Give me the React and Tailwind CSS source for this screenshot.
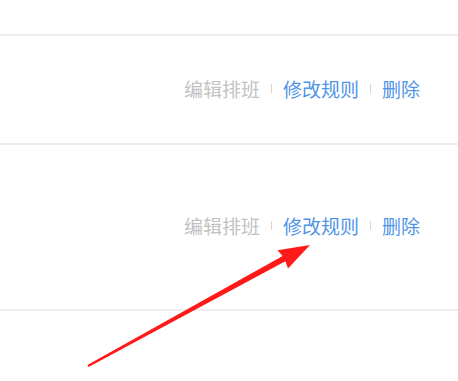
import React from "react";

const rows = [
  { height: "h-[109px]" },
  { height: "h-[166px]" },
];

function Actions() {
  return (
    <div className="flex items-center text-[19px] leading-none">
      <span className="text-[#c2c2c2] cursor-pointer">编辑排班</span>
      <span className="mx-[11px] h-[9px] w-px bg-[#d6d6d6]" />
      <span className="text-[#5094e8] cursor-pointer">修改规则</span>
      <span className="mx-[11px] h-[9px] w-px bg-[#d6d6d6]" />
      <span className="text-[#5094e8] cursor-pointer">删除</span>
    </div>
  );
}

export default function App() {
  return (
    <div
      className="relative h-[381px] w-[458px] overflow-hidden bg-white"
      style={{ fontFamily: '"Noto Sans CJK SC", "Noto Sans", sans-serif' }}
    >
      <div className="h-[36px] border-b-2 border-[#eeeeee]" />
      {rows.map((r, i) => (
        <div
          key={i}
          className={`${r.height} flex items-center justify-end border-b-2 border-[#eeeeee] pr-[38px] pb-[3px]`}
        >
          <Actions />
        </div>
      ))}

      {/* red annotation arrow */}
      <svg
        className="pointer-events-none absolute left-0 top-0"
        width="458"
        height="381"
        viewBox="0 0 458 381"
      >
        <polygon
          points="88.6,367 285.4,261.3 288,268.5 310,245 277.5,250.3 282.6,256.1 87.4,365"
          fill="#ff1a1a"
        />
      </svg>
    </div>
  );
}
